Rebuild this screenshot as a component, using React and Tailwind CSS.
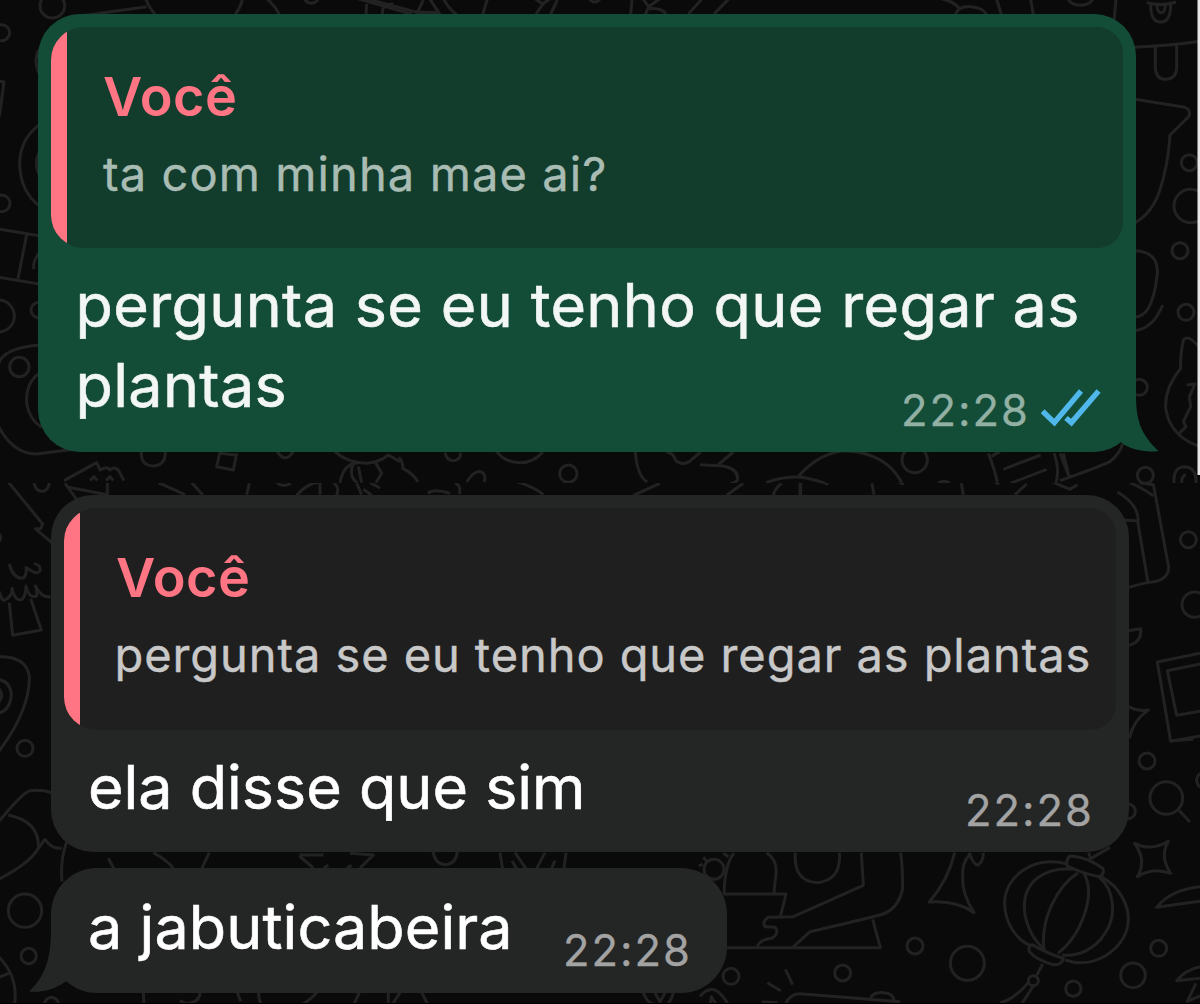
function Wallpaper() {
  return (
    <svg
      className="absolute inset-0"
      width="1200"
      height="1004"
      viewBox="0 0 1200 1004"
      fill="none"
      stroke="#222222"
      strokeWidth="9"
      strokeLinejoin="round"
    >
      <defs>
        <clipPath id="upper">
          <rect x="0" y="0" width="1200" height="483" />
        </clipPath>
        <clipPath id="lower">
          <rect x="0" y="483" width="1200" height="521" />
        </clipPath>
      </defs>
      <g clipPath="url(#upper)">
        {/* top left */}
        <g transform="scale(0.33333)">
          <circle cx="157" cy="17" r="37" />
          <circle cx="5" cy="98" r="24" />
          <path d="M240 48 L440 20 M438 -2 Q448 25 465 42 M727 0 Q720 25 706 42 M800 -4 Q822 14 838 42 M1095 -5 L1300 50 M1180 12 Q1142 14 1148 44" />
          <circle cx="934" cy="-12" r="22" />
          <path d="M118 148 Q98 180 118 222 M-4 243 L12 246 L-2 350 M118 374 Q58 420 59 495 Q62 575 118 618 M118 455 Q100 490 118 525" />
          <circle cx="5" cy="610" r="25" />
          <path d="M-4 687 L118 707 M80 704 L54 836 M-4 832 L118 852 M116 760 Q96 790 102 808" />
        </g>
        {/* top edge */}
        <g transform="translate(260 0) scale(0.33333)">
          <path d="M290 -5 L455 42 M320 12 L318 42 M490 0 L470 42 M510 -2 Q525 20 540 44 M465 36 L540 38 M550 -4 Q565 25 590 44 M682 -2 L668 44 M825 -4 L848 12 L870 -4 M850 10 L828 42 M892 0 L872 42 M1116 0 L1112 44 M1150 -2 L1166 20 L1200 -4 M1166 20 L1156 44 M1168 26 Q1205 22 1218 42 M1325 -2 L1285 42 M1405 -2 L1362 42" />
          <circle cx="1004" cy="-12" r="18" />
        </g>
        {/* right edge */}
        <g transform="translate(800 0) scale(0.33333)">
          <path d="M425 -4 Q465 5 482 30 M466 44 Q475 18 512 20 Q548 22 560 44 M590 -2 L604 44 M692 -2 L700 44 M805 -2 Q815 16 842 16 Q868 16 878 -2 M948 -2 L942 62" />
          <path d="M1040 8 Q1085 20 1128 6 M1052 14 Q1052 66 1082 66 Q1112 66 1112 14 M1070 14 Q1072 38 1084 38 Q1096 38 1096 12" />
          <path d="M1000 142 Q1110 138 1200 124 M1066 138 V205 Q1068 238 1098 238 Q1128 236 1130 205 V132" />
          <path d="M1005 298 L1155 322 Q1175 330 1166 350 L1110 405 Q1104 500 1078 575 Q1055 640 1005 668" />
          <circle cx="1168" cy="488" r="24" />
          <circle cx="1172" cy="618" r="50" />
          <circle cx="1140" cy="752" r="24" />
          <path d="M1005 752 Q1075 755 1072 820 Q1065 890 1045 925 Q1030 950 1005 952 M1088 915 Q1060 985 1005 992" />
          <circle cx="1158" cy="937" r="24" />
        </g>
        <g transform="translate(800 240) scale(0.33333)">
          <circle cx="1018" cy="442" r="24" />
          <path d="M1200 325 Q1165 280 1150 300 Q1140 350 1142 385 Q1090 450 1098 510 Q1112 590 1200 620 M1160 435 L1185 432 L1168 470 L1172 500 L1150 545 L1158 560 L1138 580" />
          <path d="M-4 708 Q60 635 140 632 Q260 640 305 728 M-4 710 Q40 716 75 730 M415 730 Q432 718 450 730" />
          <circle cx="344" cy="660" r="38" />
          <path d="M565 640 Q585 690 592 728 M575 650 Q590 638 600 636 M610 688 L722 645 M632 730 L740 688 M762 640 Q780 690 768 728 M780 640 L808 712 M790 640 L808 712 M780 722 Q900 680 930 665 Q960 640 968 612" />
          <circle cx="1036" cy="706" r="24" />
          <path d="M1122 730 Q1118 680 1155 680 Q1190 682 1188 730 M1145 730 Q1145 705 1158 705" />
        </g>
        {/* lower left of the upper half */}
        <g transform="translate(0 240) scale(0.33333)">
          <circle cx="-5" cy="228" r="48" />
          <circle cx="58" cy="381" r="29" />
          <circle cx="116" cy="210" r="23" />
          <path d="M118 315 Q5 325 -5 375 M118 400 Q76 430 80 490 Q88 540 125 562 M-4 560 Q40 642 110 642 L220 628" />
          <path d="M424 632 Q420 676 460 678 Q498 676 496 632 M660 636 L650 680 L700 690 L710 640 M660 640 L710 646 M832 635 Q855 672 880 635" />
          <path d="M372 722 L355 690 Q342 678 330 690 Q322 676 300 690 L290 668 L192 722 M270 722 L282 710 L292 722 M318 722 L330 710 L340 722" />
          <path d="M1005 635 Q1040 668 1100 670 Q1140 666 1165 645 L1200 665 M1075 668 Q1030 670 1020 728 M1060 670 Q1044 710 1072 728 M1075 680 L1085 728 M1125 665 L1145 700 L1128 728" />
        </g>
        {/* strip below the outgoing bubble */}
        <g transform="translate(400 430) scale(0.33333)">
          <path d="M-4 82 Q10 95 8 115 Q40 130 54 156 M135 68 Q140 92 160 92 Q182 90 182 68 M290 64 Q315 98 360 98 Q402 98 428 66 M200 156 Q225 118 245 126 Q260 135 252 156 M706 66 Q712 140 742 156 M800 66 Q822 70 826 90 Q845 108 868 95 L902 66 M1000 66 L955 104 M900 104 L970 108 Q1018 118 1012 150 Q1006 160 990 160 M1098 158 Q1150 138 1215 142" />
          <circle cx="505" cy="131" r="26" />
        </g>
      </g>
      <g clipPath="url(#lower)">
        <g transform="translate(400 430) scale(0.33333)">
          <path d="M84 190 Q100 175 150 190 M165 160 Q184 165 178 192 M350 155 Q400 170 430 194 M780 160 L700 196 M1030 160 L980 196 M1145 160 Q1125 175 1120 196 M1200 160 V196" />
        </g>
        <g transform="translate(0 480) scale(0.33333)">
          <path d="M20 0 L128 132 L122 146 L106 146 L158 190 M102 8 Q106 34 126 34 Q144 34 148 8 M195 10 L230 58 M205 22 L325 45 M322 8 L322 46 M475 8 L555 44 M575 8 L608 44 M748 10 L740 44 M830 8 Q850 24 872 10 M890 46 Q920 10 960 6 M960 8 V44 M1000 8 Q1020 20 1010 46 M1070 10 L1085 44 M1090 28 L1115 46 M1110 8 L1140 24" />
          <path d="M-4 160 Q6 170 -2 185" />
          <path d="M28 252 Q40 298 70 294 Q82 284 78 262 Q112 288 120 272 Q124 256 102 250 M-2 335 Q5 368 18 358 Q36 350 36 325 Q45 366 66 358 Q78 346 78 318 Q86 356 110 348 Q112 330 106 318 Q125 355 152 350 M28 368 L38 466 L124 450 L92 356" />
          <path d="M-4 530 Q80 528 88 590 Q90 690 -4 815 M-4 598 Q32 606 34 645 Q30 690 -4 700 M-4 625 Q14 645 -4 668" />
          <circle cx="75" cy="805" r="24" />
        </g>
        <g transform="translate(800 480) scale(0.33333)">
          <path d="M2 8 V44 M216 10 L222 44 M484 10 L490 44 M60 4 L85 12 M290 4 L312 12 M680 12 L645 44 M580 4 L598 12 M755 5 L810 28 L832 14 M1018 8 L1060 14 M990 8 Q1030 25 1060 48 M1060 12 L1106 262 Q1106 305 1040 308 L985 322 M952 36 Q1020 75 1014 130 L1044 308 M965 120 L1010 122" />
          <circle cx="1165" cy="179" r="24" />
          <circle cx="1184" cy="374" r="38" />
          <path d="M985 452 L1022 446 Q1026 485 988 496" />
          <path d="M1200 520 L1072 546 L1112 784 L1200 768 M1200 552 L1102 572 L1130 706 L1200 694" />
          <path d="M985 680 Q1015 695 1045 690 Q1000 720 988 775" />
        </g>
        <g transform="translate(0 740) scale(0.33333)">
          <path d="M-4 245 Q70 155 90 152 Q125 148 155 158 M25 225 Q120 245 115 325 Q90 370 -4 418 M115 325 L135 298 Q155 328 185 324 M200 306 Q180 360 186 425" />
          <circle cx="75" cy="512" r="50" />
          <circle cx="86" cy="648" r="23" />
          <path d="M-4 650 Q55 710 44 792 M-4 712 L26 700 M134 792 Q136 774 155 772 Q174 776 176 792" />
          <path d="M325 355 L342 386 M460 338 Q500 360 520 384 M628 338 L606 384 M898 345 L970 345 M898 348 L940 384 M1050 340 L1120 345 L1080 384 M970 384 L985 376 M1040 384 L1055 376" />
          <path d="M430 758 L432 792 M540 782 L560 792 Q600 785 600 758 M712 758 L722 784 M776 758 Q776 790 790 796 M950 758 Q925 785 900 796 M1078 758 L1060 796 M1165 758 V796" />
        </g>
        <g transform="translate(400 740) scale(0.33333)">
          <path d="M100 336 Q104 372 136 374 Q168 372 172 336 M300 338 L308 386 M336 362 L350 386 M345 338 L378 386 M435 338 L410 386 M465 362 L455 386 M498 338 L492 386 M0 758 L-25 796 M65 758 L85 796 M730 758 Q745 796 765 792 M765 758 L780 785 L795 758 M820 758 Q815 780 800 796" />
        </g>
        <g transform="translate(700 740) scale(0.33333)">
          <path d="M-4 378 L8 372 M10 352 L20 364 M70 340 L86 350" />
          <circle cx="42" cy="388" r="30" />
          <path d="M72 462 Q75 370 102 340 M200 338 Q232 360 228 400 L222 458 M70 462 L258 462 L242 526 M286 338 Q280 425 352 428 Q425 420 418 338 M484 338 L490 436 L280 530 L205 532 Q185 545 195 560 L225 562 Q240 580 215 595 Q175 600 172 622 M602 338 Q608 380 608 445 Q595 510 540 525 Q420 555 330 575 L278 622 M80 623 L541 623 L518 538" />
          <path d="M764 338 Q745 420 688 486 Q770 480 822 518 Q785 460 788 410 Q785 370 808 345 M808 338 Q820 375 834 375 Q850 365 850 338" />
          <circle cx="645" cy="618" r="24" />
          <circle cx="802" cy="670" r="51" />
          <circle cx="93" cy="709" r="24" />
          <circle cx="428" cy="699" r="24" />
          <circle cx="1299" cy="706" r="37" />
          <circle cx="1376" cy="625" r="24" />
          <circle cx="1120" cy="746" r="23" />
          <circle cx="1341" cy="63" r="24" />
          <circle cx="1284" cy="214" r="22" />
          <circle cx="1399" cy="174" r="49" />
          <path d="M1434 208 L1470 246" />
          <path d="M1303 310 Q1355 335 1405 304 Q1378 350 1412 400 Q1360 380 1312 410 Q1342 360 1303 310 Z" />
          <path d="M1102 372 C1000 345 910 410 914 495 C916 550 950 600 990 616 M1120 388 C1040 380 970 420 973 505 C976 560 1005 605 1035 630 M1134 398 C1070 440 1020 540 1032 632 M1152 400 C1190 470 1140 590 1074 640 M1196 410 C1245 450 1250 530 1215 580 C1185 630 1130 650 1086 645 M1206 412 C1260 440 1290 500 1284 550 C1275 630 1180 690 1095 660" />
          <path d="M1110 348 Q1160 350 1208 385 Q1215 400 1200 410 Q1150 402 1102 378 Q1096 360 1110 348 Z M996 614 Q1040 640 1090 655 Q1085 676 1060 674 Q1010 660 988 635 Q984 618 996 614 Z M1166 338 L1172 358 M1172 356 L1230 322 M1028 672 L1010 706 M985 728 Q940 780 900 788 M1000 738 L965 792" />
          <circle cx="1000" cy="722" r="15" />
          <path d="M1500 440 Q1410 450 1370 502 Q1440 492 1500 484 M1500 680 Q1455 690 1430 722 L1500 715 M1488 730 L1462 784 L1500 768 M1500 100 Q1480 120 1500 142 M1410 2 L1480 -2" />
          <path d="M256 688 L278 734 M202 728 L242 752 M186 786 L232 788 M255 796 Q270 756 310 762 L600 785 M512 774 Q520 756 550 758 Q580 760 582 780 M0 770 Q20 742 46 750 Q70 765 86 796 M30 796 L34 770 L50 796" />
        </g>
      </g>
      <rect x="1197.5" y="0" width="2.5" height="475" fill="#e8e8e8" stroke="none" />
      <rect x="0" y="1003" width="1200" height="1" fill="#000000" stroke="none" />
    </svg>
  );
}

function Quote({ className, textClassName, children }) {
  return (
    <div className={`relative overflow-hidden rounded-l-[33px] rounded-r-[26px] ${className}`}>
      <div className="absolute inset-y-0 left-0 w-4 bg-[#ff7583]" />
      <div className="ml-[52px] pt-[38px] whitespace-nowrap">
        <div className="text-[54px] leading-[64px] font-semibold tracking-[0.5px] text-[#ff7583]">
          Você
        </div>
        <div
          className={`mt-[16.5px] text-[47px] leading-[56px] [-webkit-text-stroke:0.4px] ${textClassName}`}
        >
          {children}
        </div>
      </div>
    </div>
  );
}

function Time({ className }) {
  return (
    <div
      className={`text-[43.5px] leading-[48px] tracking-[2px] whitespace-nowrap [-webkit-text-stroke:0.3px] ${className}`}
    >
      22:28
    </div>
  );
}

function ReadMarks() {
  return (
    <svg
      className="ml-[10px] mt-[3px]"
      width="62"
      height="42"
      viewBox="0 0 62 42"
      fill="none"
      stroke="#4fb7ea"
      strokeWidth="5.4"
      strokeLinecap="butt"
      strokeLinejoin="miter"
    >
      <path d="M2.6 22.2 L14.4 33.6 L41 2" />
      <path d="M26 29 L31.4 33.6 L58.6 2" />
    </svg>
  );
}

export default function App() {
  return (
    <div className="relative h-[1004px] w-[1200px] overflow-hidden bg-[#0a0a0a] font-['Inter',sans-serif] text-white">
      <Wallpaper />
      <div className="relative flex flex-col items-start pt-[14px]">
        <div className="relative ml-[38px] h-[438px] w-[1098px] rounded-[42px] bg-[#144d37] px-[13px] pt-[13px]">
          <svg
            className="absolute -right-[23px] bottom-0"
            width="63"
            height="80"
            viewBox="0 0 63 80"
            fill="#144d37"
          >
            <path d="M0 0 H40 V24 C40 46 44 62 62.5 79 C48 81 34 77 25 70.5 L0 50 Z" />
          </svg>
          <Quote
            className="h-[221px] w-[1072px] bg-[#123c2c]"
            textClassName="tracking-[1.1px] text-[#a9bcb3]"
          >
            ta com minha mae ai?
          </Quote>
          <div className="relative mt-[16.5px] ml-[24.5px] text-[61px] leading-[80px] tracking-[0.36px] whitespace-nowrap text-[#f2f6f4] [-webkit-text-stroke:0.6px]">
            pergunta se eu tenho que regar as
            <br />
            plantas
          </div>
          <div className="relative -mt-[38.5px] mr-[21px] flex justify-end">
            <Time className="text-[#92b0a4]" />
            <ReadMarks />
          </div>
        </div>

        <div className="mt-[43px] ml-[51px] h-[357px] w-[1078px] rounded-[42px] bg-[#242625] px-[13px] pt-[13px]">
          <Quote
            className="h-[222px] w-[1052px] bg-[#1f1f1f]"
            textClassName="-ml-[1.5px] tracking-[0.92px] text-[#c8c8c8]"
          >
            pergunta se eu tenho que regar as plantas
          </Quote>
          <div className="mt-[16.5px] mr-[22px] ml-[24px] flex items-start justify-between">
            <div className="text-[61px] leading-[80px] whitespace-nowrap [-webkit-text-stroke:0.6px]">
              ela disse que sim
            </div>
            <Time className="mt-[39.5px] text-[#a3a3a3]" />
          </div>
        </div>

        <div className="relative mt-4 ml-[51px] flex h-[125px] w-[676px] items-start justify-between rounded-[46px] bg-[#242625] pt-[19px] pr-[35px] pl-[37px]">
          <svg
            className="absolute bottom-0 -left-[23px]"
            width="66"
            height="80"
            viewBox="0 0 66 80"
            fill="#242625"
          >
            <path d="M66 0 H23 V16 C23 42 19 62 1 78.5 C14 80 28 76 37.5 68.5 L66 50 Z" />
          </svg>
          <div className="relative text-[61px] leading-[80px] tracking-[0.1px] whitespace-nowrap [-webkit-text-stroke:0.6px]">
            a jabuticabeira
          </div>
          <Time className="relative mt-[39px] text-[#a3a3a3]" />
        </div>
      </div>
    </div>
  );
}
